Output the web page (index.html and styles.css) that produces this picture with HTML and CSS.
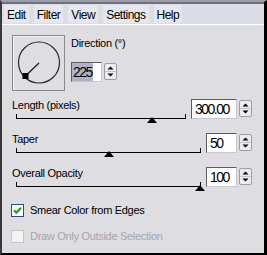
FILE: index.html
```html
<!DOCTYPE html>
<html>
<head>
<meta charset="utf-8">
<link rel="stylesheet" href="styles.css">
</head>
<body>
<div class="window">
  <div class="menubar">
    <span class="mi">Edit</span>
    <span class="mi">Filter</span>
    <span class="mi">View</span>
    <span class="mi">Settings</span>
    <span class="mi">Help</span>
  </div>
  <div class="panel">
    <div class="dir-row">
      <div class="dial">
        <svg width="51" height="54" viewBox="0 0 51 54">
          <circle cx="26" cy="26.5" r="20.5" fill="none" stroke="#2a2a2a" stroke-width="1.2"/>
          <line x1="26" y1="27" x2="13" y2="39.5" stroke="#1a1a1a" stroke-width="1.2"/>
          <rect x="9.5" y="37" width="6" height="6" fill="#000"/>
        </svg>
      </div>
      <div class="dir-ctl">
        <div class="label">Direction (°)</div>
        <div class="field-row">
          <div class="input w30"><span class="sel">225</span></div>
          <svg class="spin" width="13" height="17" viewBox="0 0 13 17"><rect x="0.5" y="0.5" width="12" height="16" rx="1.5" fill="#ebebf0" stroke="#9d9da8"/><line x1="1" y1="8.5" x2="12" y2="8.5" stroke="#c4c4cc"/><polygon points="3.5,6.5 9.5,6.5 6.5,3.5" fill="#000"/><polygon points="3.5,10.5 9.5,10.5 6.5,13.5" fill="#000"/></svg>
        </div>
      </div>
    </div>

    <div class="srow">
      <div class="sl-left">
        <div class="label">Length (pixels)</div>
        <div class="track"><span class="thumb" style="left:80.5%"></span></div>
      </div>
      <div class="input w46">300.00</div>
      <svg class="spin" width="13" height="17" viewBox="0 0 13 17"><rect x="0.5" y="0.5" width="12" height="16" rx="1.5" fill="#ebebf0" stroke="#9d9da8"/><line x1="1" y1="8.5" x2="12" y2="8.5" stroke="#c4c4cc"/><polygon points="3.5,6.5 9.5,6.5 6.5,3.5" fill="#000"/><polygon points="3.5,10.5 9.5,10.5 6.5,13.5" fill="#000"/></svg>
    </div>

    <div class="srow">
      <div class="sl-left">
        <div class="label">Taper</div>
        <div class="track"><span class="thumb" style="left:50%"></span></div>
      </div>
      <div class="input w31">50</div>
      <svg class="spin" width="13" height="17" viewBox="0 0 13 17"><rect x="0.5" y="0.5" width="12" height="16" rx="1.5" fill="#ebebf0" stroke="#9d9da8"/><line x1="1" y1="8.5" x2="12" y2="8.5" stroke="#c4c4cc"/><polygon points="3.5,6.5 9.5,6.5 6.5,3.5" fill="#000"/><polygon points="3.5,10.5 9.5,10.5 6.5,13.5" fill="#000"/></svg>
    </div>

    <div class="srow">
      <div class="sl-left">
        <div class="label">Overall Opacity</div>
        <div class="track"><span class="thumb" style="left:100%"></span></div>
      </div>
      <div class="input w31">100</div>
      <svg class="spin" width="13" height="17" viewBox="0 0 13 17"><rect x="0.5" y="0.5" width="12" height="16" rx="1.5" fill="#ebebf0" stroke="#9d9da8"/><line x1="1" y1="8.5" x2="12" y2="8.5" stroke="#c4c4cc"/><polygon points="3.5,6.5 9.5,6.5 6.5,3.5" fill="#000"/><polygon points="3.5,10.5 9.5,10.5 6.5,13.5" fill="#000"/></svg>
    </div>

    <div class="check">
      <svg class="cb" width="13" height="13" viewBox="0 0 13 13"><rect x="0.5" y="0.5" width="12" height="12" fill="#fff" stroke="#1f4f86"/><path d="M3 6.3 L5.3 8.6 L10 3.9" fill="none" stroke="#21a121" stroke-width="2.2"/></svg>
      <span class="label">Smear Color from Edges</span>
    </div>
    <div class="check disabled">
      <svg class="cb" width="13" height="13" viewBox="0 0 13 13"><rect x="0.5" y="0.5" width="12" height="12" fill="#f3f3f3" stroke="#c6c6c6"/></svg>
      <span class="label">Draw Only Outside Selection</span>
    </div>
  </div>
</div>
</body>
</html>
```
FILE: styles.css
```css
html, body {
  margin: 0;
  padding: 0;
}
body {
  width: 267px;
  height: 255px;
  overflow: hidden;
  background: #dddde2;
  font-family: "Liberation Sans", Arial, sans-serif;
  color: #000;
}
.window {
  box-sizing: border-box;
  width: 267px;
  height: 255px;
  border-style: solid;
  border-width: 2px 3px 2px 2px;
  border-color: #9c9ca6 #000 #000 #3a3a3a;
  background: #dddde2;
  display: flex;
  flex-direction: column;
}
.menubar {
  height: 20px;
  border-top: 2px solid #70707f;
  border-bottom: 1px solid #fff;
  background: #dadce6;
  display: flex;
  align-items: center;
  gap: 5px;
  padding-left: 2px;
  font-size: 12px;
  letter-spacing: -0.5px;
}
.mi {
  padding: 3px 3px 1px 3px;
  line-height: 14px;
  background: #e6e7ee;
}
.panel {
  flex: 1;
  padding: 10px 0 0 10px;
}
.label {
  font-size: 11px;
  line-height: 13px;
  letter-spacing: -0.3px;
  white-space: nowrap;
}
.dir-row {
  display: flex;
  gap: 6px;
  height: 56px;
  margin-bottom: 8px;
}
.dial {
  box-sizing: border-box;
  width: 53px;
  height: 56px;
  border: 1px solid #8a8a8e;
  box-shadow: inset 1px 1px 0 #f4f4f6;
}
.dial svg {
  display: block;
}
.dir-ctl {
  padding-top: 2px;
}
.field-row {
  display: flex;
  align-items: flex-start;
  margin-top: 12px;
}
.input {
  box-sizing: border-box;
  height: 20px;
  background: #fff;
  border: 1px solid;
  border-color: #5e5e5e #c8c8cc #c8c8cc #5e5e5e;
  font-size: 14px;
  line-height: 18px;
  letter-spacing: -1.5px;
  padding-left: 3px;
  white-space: nowrap;
  overflow: hidden;
}
.w30 { width: 31px; padding-left: 0; }
.w46 { width: 46px; margin-left: 5px; }
.w31 { width: 31px; margin-left: 5px; }
.sel {
  background: #aeb2c4;
  padding: 0 1px 0 1px;
  display: inline-block;
  line-height: 18px;
}
.spin {
  display: block;
  margin: 1px 0 0 2px;
  flex: none;
}
.srow {
  display: flex;
  align-items: flex-start;
  width: 240px;
  height: 34px;
}
.sl-left {
  flex: 1;
}
.track {
  position: relative;
  margin: 2px 0 0 4px;
  height: 4px;
  border: 1px solid #000;
  border-top: 0;
}
.thumb {
  position: absolute;
  top: 3px;
  width: 0;
  height: 0;
  margin-left: -5px;
  border-left: 5px solid transparent;
  border-right: 5px solid transparent;
  border-bottom: 6px solid #000;
}
.check {
  display: flex;
  align-items: center;
  gap: 6px;
  height: 16px;
  margin-top: 1px;
  margin-left: -1px;
}
.check + .check {
  margin-top: 10px;
}
.cb {
  display: block;
  flex: none;
}
.disabled .label {
  color: #a6a6aa;
}
```
